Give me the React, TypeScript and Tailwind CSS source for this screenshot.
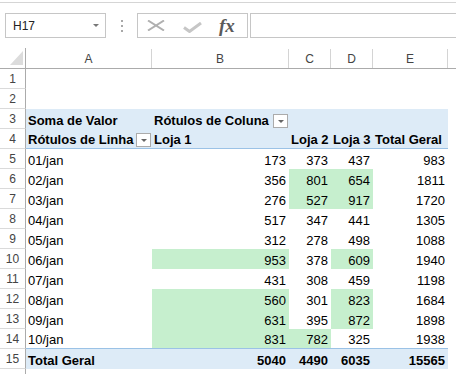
const cols = ["A", "B", "C", "D", "E"];

type Row = { label: string; vals: number[]; green: number[] };

// green = column indexes (0=B,1=C,2=D) with the conditional fill
const data: Row[] = [
  { label: "01/jan", vals: [173, 373, 437, 983], green: [] },
  { label: "02/jan", vals: [356, 801, 654, 1811], green: [1, 2] },
  { label: "03/jan", vals: [276, 527, 917, 1720], green: [1, 2] },
  { label: "04/jan", vals: [517, 347, 441, 1305], green: [] },
  { label: "05/jan", vals: [312, 278, 498, 1088], green: [] },
  { label: "06/jan", vals: [953, 378, 609, 1940], green: [0, 2] },
  { label: "07/jan", vals: [431, 308, 459, 1198], green: [] },
  { label: "08/jan", vals: [560, 301, 823, 1684], green: [0, 2] },
  { label: "09/jan", vals: [631, 395, 872, 1898], green: [0, 2] },
  { label: "10/jan", vals: [831, 782, 325, 1938], green: [0, 1] },
];

const grid = "grid grid-cols-[26px_126px_137px_42px_42px_75px_1fr]";
const cell = "flex items-end pb-[2px] leading-none text-[13px] text-black whitespace-nowrap";

function RowNum({ n }: { n: number }) {
  return (
    <div className="flex items-center justify-center text-[12px] text-[#444] border-r border-b border-r-[#ababab] border-b-[#dadada]">
      {n}
    </div>
  );
}

function Drop() {
  return (
    <span className="ml-auto mb-[-1px] w-[15px] h-[14px] border border-[#ababab] bg-white flex items-center justify-center">
      <span className="w-0 h-0 border-l-[3px] border-r-[3px] border-t-[3px] border-l-transparent border-r-transparent border-t-[#666]" />
    </span>
  );
}

export default function App() {
  return (
    <div className="w-[456px] h-[374px] bg-white overflow-hidden font-['Liberation_Sans',Arial,sans-serif]">
      <div className="pt-[2px]">
        <div className="h-px bg-[#d5d5d5]" />
      </div>

      {/* formula bar */}
      <div className="flex items-center h-[25px] mt-[10px]">
        <div className="ml-[5px] w-[101px] h-full border border-[#c6c6c6] flex items-center pl-[7px] pr-[6px] text-[12px] text-[#222]">
          H17
          <span className="ml-auto w-0 h-0 border-l-[3px] border-r-[3px] border-t-[3px] border-l-transparent border-r-transparent border-t-[#777]" />
        </div>
        <div className="w-[31px] flex flex-col items-center gap-[3px]">
          <span className="w-[2px] h-[2px] bg-[#a8a8a8]" />
          <span className="w-[2px] h-[2px] bg-[#a8a8a8]" />
          <span className="w-[2px] h-[2px] bg-[#a8a8a8]" />
        </div>
        <div className="w-[111px] h-full border border-[#c6c6c6] flex items-center pl-[9px]">
          <svg width="18" height="11" viewBox="0 0 18 11">
            <path d="M1 0.5L17 10.5M17 0.5L1 10.5" stroke="#b0b0b0" strokeWidth="2" fill="none" />
          </svg>
          <svg width="19" height="11" viewBox="0 0 19 11" className="ml-[18px] mt-[3px]">
            <path d="M1 5.5L6.5 9.5L18 1" stroke="#c6c6c6" strokeWidth="3" fill="none" />
          </svg>
          <span className="ml-[17px] font-['Liberation_Serif',serif] italic font-bold text-[19px] leading-none text-[#5a5a5a]">
            fx
          </span>
        </div>
        <div className="ml-[2px] flex-1 h-full border border-r-0 border-[#c6c6c6]" />
      </div>

      {/* column headers */}
      <div className={`${grid} h-[21px] mt-[10px] border-b border-[#ababab]`}>
        <div className="relative border-r border-[#ababab]">
          <svg width="13" height="14" viewBox="0 0 13 14" className="absolute left-[10px] top-[3px]">
            <path d="M13 0L13 14L0 14Z" fill="#dcdcdc" />
          </svg>
        </div>
        {cols.map((c) => (
          <div
            key={c}
            className="flex items-center justify-center text-[12px] text-[#444] border-r border-[#d4d4d4] mt-px"
          >
            {c}
          </div>
        ))}
        <div />
      </div>

      {/* sheet body */}
      <div className={`${grid} auto-rows-[20px]`}>
        <RowNum n={1} />
        <div className="col-span-6" />
        <RowNum n={2} />
        <div className="col-span-6" />

        <RowNum n={3} />
        <div className={`${cell} bg-[#ddebf7] font-bold pl-[2px]`}>Soma de Valor</div>
        <div className={`${cell} bg-[#ddebf7] font-bold pl-[2px] pr-px`}>
          Rótulos de Coluna
          <Drop />
        </div>
        <div className="bg-[#ddebf7]" />
        <div className="bg-[#ddebf7]" />
        <div className="bg-[#ddebf7]" />
        <div />

        <RowNum n={4} />
        <div className={`${cell} bg-[#ddebf7] font-bold pl-[2px] pr-[3px] border-b border-[#9bc2e6]`}>
          Rótulos de Linha
          <span className="ml-[3px]">
            <Drop />
          </span>
        </div>
        <div className={`${cell} bg-[#ddebf7] font-bold pl-[2px] border-b border-[#9bc2e6]`}>Loja 1</div>
        <div className={`${cell} bg-[#ddebf7] font-bold pl-[2px] border-b border-[#9bc2e6]`}>Loja 2</div>
        <div className={`${cell} bg-[#ddebf7] font-bold pl-[2px] border-b border-[#9bc2e6]`}>Loja 3</div>
        <div className={`${cell} bg-[#ddebf7] font-bold pl-[2px] border-b border-[#9bc2e6]`}>Total Geral</div>
        <div />

        {data.map((r, i) => {
          const last = i === data.length - 1;
          const edge = last ? "border-b border-[#9bc2e6]" : "";
          return [
            <RowNum key={`n${i}`} n={i + 5} />,
            <div key={`a${i}`} className={`${cell} pl-[2px] ${edge}`}>
              {r.label}
            </div>,
            ...r.vals.map((v, j) => (
              <div
                key={`v${i}-${j}`}
                className={`${cell} justify-end pr-[3px] ${edge} ${
                  r.green.includes(j) ? "bg-[#c6efce] text-[#006100]" : ""
                }`}
              >
                {v}
              </div>
            )),
            <div key={`f${i}`} />,
          ];
        })}

        <RowNum n={15} />
        <div className={`${cell} bg-[#ddebf7] font-bold pl-[2px]`}>Total Geral</div>
        {[5040, 4490, 6035, 15565].map((v) => (
          <div key={v} className={`${cell} bg-[#ddebf7] font-bold justify-end pr-[3px]`}>
            {v}
          </div>
        ))}
        <div />
      </div>
      <div className="w-[26px] h-[5px] border-r border-[#ababab]" />
    </div>
  );
}
